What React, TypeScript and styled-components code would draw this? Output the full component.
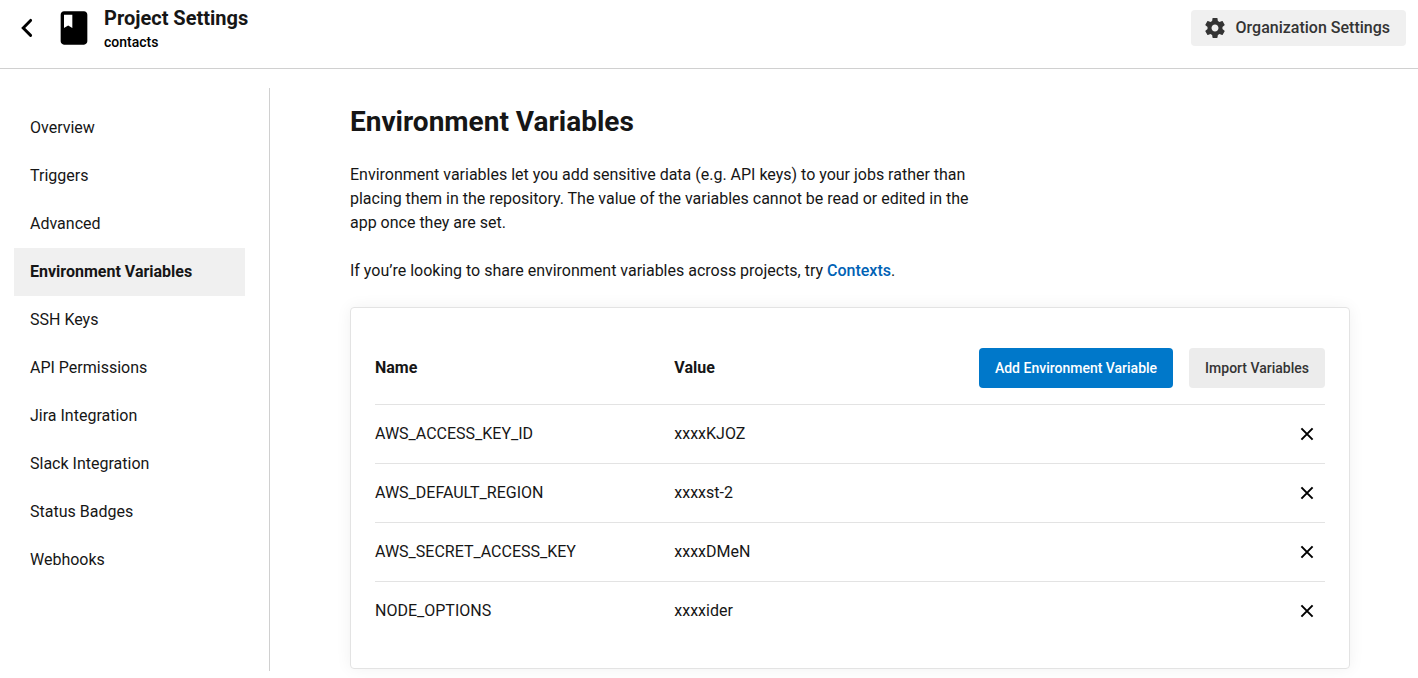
import React from "react";
import styled, { createGlobalStyle } from "styled-components";

const GlobalStyle = createGlobalStyle`
  *, *::before, *::after { box-sizing: border-box; }
  body {
    margin: 0;
    background: #fff;
    color: #161616;
    font-family: Roboto, "Liberation Sans", sans-serif;
    font-size: 16px;
    line-height: 24px;
  }
  h1, h2, p { margin: 0; }
  button { font-family: inherit; border: 0; cursor: pointer; }
`;

const Page = styled.div`
  height: 678px;
  overflow: hidden;
`;

const Header = styled.header`
  display: flex;
  align-items: flex-start;
  height: 69px;
  padding: 8px 12px 0 14px;
  border-bottom: 1px solid #d0d0d0;
`;

const BackButton = styled.button`
  display: flex;
  width: 26px;
  height: 40px;
  padding: 0;
  align-items: center;
  justify-content: center;
  background: none;
`;

const BookIcon = styled.svg`
  width: 40px;
  height: 40px;
  margin-left: 14px;
`;

const Titles = styled.div`
  flex: 1;
  margin-left: 10px;
`;

const Title = styled.h1`
  font-size: 20px;
  font-weight: 700;
  line-height: 20px;
`;

const Subtitle = styled.p`
  margin-top: 4px;
  font-size: 14px;
  font-weight: 500;
  line-height: 20px;
  color: #000;
`;

const OrgButton = styled.button`
  display: flex;
  align-items: center;
  width: 215px;
  height: 36px;
  margin-top: 2px;
  padding: 0 16px 0 12px;
  justify-content: space-between;
  border-radius: 4px;
  background: #f0f0f0;
  color: #343434;
  font-size: 16px;
  font-weight: 500;
  line-height: 20px;
`;

const Body = styled.div`
  display: flex;
  align-items: flex-start;
  padding-top: 19px;
`;

const Sidebar = styled.nav`
  width: 270px;
  height: 583px;
  padding: 16px 24px 0 14px;
  border-right: 1px solid #d0d0d0;
`;

const NavItem = styled.a<{ $active?: boolean }>`
  display: block;
  height: 48px;
  padding: 12px 16px;
  line-height: 24px;
  white-space: nowrap;
  font-weight: ${(p) => (p.$active ? 700 : 400)};
  background: ${(p) => (p.$active ? "#f0f0f0" : "transparent")};
`;

const Main = styled.main`
  width: 1000px;
  margin-left: 80px;
  padding-top: 17px;
`;

const Heading = styled.h2`
  font-size: 28px;
  font-weight: 700;
  line-height: 34px;
`;

const Paragraph = styled.p`
  width: 640px;
  margin-top: 24px;
  letter-spacing: -0.006px;
`;

const TextLink = styled.a`
  color: #0062b5;
  font-weight: 500;
`;

const Card = styled.section`
  height: 362px;
  margin-top: 24px;
  padding: 40px 24px 0;
  border: 1px solid #e3e3e3;
  border-radius: 4px;
  box-shadow: 0 0 16px rgba(0, 0, 0, 0.06);
`;

const Row = styled.div`
  display: grid;
  grid-template-columns: 299.3px 1fr auto;
  align-items: center;
  height: 59px;
  padding-right: 8px;
  padding-bottom: 1px;
  border-top: 1px solid #e3e3e3;
`;

const HeadRow = styled(Row)`
  height: 56px;
  padding-right: 0;
  padding-bottom: 16px;
  border-top: 0;
  font-weight: 700;
`;

const Actions = styled.div`
  display: flex;
  gap: 16px;
`;

const ActionButton = styled.button<{ $primary?: boolean }>`
  height: 40px;
  padding: 0 16px;
  border-radius: 4px;
  font-size: 14px;
  font-weight: 500;
  white-space: nowrap;
  color: ${(p) => (p.$primary ? "#fff" : "#343434")};
  background: ${(p) => (p.$primary ? "#0078ca" : "#ececec")};
`;

const RemoveButton = styled.button`
  display: flex;
  width: 20px;
  height: 20px;
  padding: 0;
  align-items: center;
  justify-content: center;
  background: none;
`;

const navItems = [
  "Overview",
  "Triggers",
  "Advanced",
  "Environment Variables",
  "SSH Keys",
  "API Permissions",
  "Jira Integration",
  "Slack Integration",
  "Status Badges",
  "Webhooks",
];

const variables = [
  { name: "AWS_ACCESS_KEY_ID", value: "xxxxKJOZ" },
  { name: "AWS_DEFAULT_REGION", value: "xxxxst-2" },
  { name: "AWS_SECRET_ACCESS_KEY", value: "xxxxDMeN" },
  { name: "NODE_OPTIONS", value: "xxxxider" },
];

export default function App() {
  return (
    <Page>
      <GlobalStyle />
      <Header>
        <BackButton aria-label="Back">
          <svg width="26" height="40" viewBox="0 0 26 40" fill="none" stroke="#000" strokeWidth="2.9" strokeLinecap="round" strokeLinejoin="miter">
            <path d="M16.6 12.4 9.2 20l7.4 7.4" />
          </svg>
        </BackButton>
        <BookIcon viewBox="0 0 24 24">
          <path d="M18 2H6c-1.1 0-2 .9-2 2v16c0 1.1.9 2 2 2h12c1.1 0 2-.9 2-2V4c0-1.1-.9-2-2-2zM6 4h5v8l-2.5-1.5L6 12V4z" />
        </BookIcon>
        <Titles>
          <Title>Project Settings</Title>
          <Subtitle>contacts</Subtitle>
        </Titles>
        <OrgButton>
          <svg width="24" height="24" viewBox="0 0 24 24" fill="#343434">
            <path d="M19.43 12.98c.04-.32.07-.64.07-.98s-.03-.66-.07-.98l2.11-1.65c.19-.15.24-.42.12-.64l-2-3.46c-.12-.22-.39-.3-.61-.22l-2.49 1c-.52-.4-1.08-.73-1.69-.98l-.38-2.65C14.46 2.18 14.25 2 14 2h-4c-.25 0-.46.18-.49.42l-.38 2.65c-.61.25-1.17.59-1.69.98l-2.49-1c-.23-.09-.49 0-.61.22l-2 3.46c-.13.22-.07.49.12.64l2.11 1.65c-.04.32-.07.65-.07.98s.03.66.07.98l-2.11 1.65c-.19.15-.24.42-.12.64l2 3.46c.12.22.39.3.61.22l2.49-1c.52.4 1.08.73 1.69.98l.38 2.65c.03.24.24.42.49.42h4c.25 0 .46-.18.49-.42l.38-2.65c.61-.25 1.17-.59 1.69-.98l2.49 1c.23.09.49 0 .61-.22l2-3.46c.12-.22.07-.49-.12-.64l-2.11-1.65zM12 15.5c-1.93 0-3.5-1.57-3.5-3.5s1.57-3.5 3.5-3.5 3.5 1.57 3.5 3.5-1.57 3.5-3.5 3.5z" />
          </svg>
          <span>Organization Settings</span>
        </OrgButton>
      </Header>
      <Body>
        <Sidebar>
          {navItems.map((item) => (
            <NavItem key={item} $active={item === "Environment Variables"}>
              {item}
            </NavItem>
          ))}
        </Sidebar>
        <Main>
          <Heading>Environment Variables</Heading>
          <Paragraph>
            Environment variables let you add sensitive data (e.g. API keys) to your jobs rather than placing them in
            the repository. The value of the variables cannot be read or edited in the app once they are set.
          </Paragraph>
          <Paragraph>
            If you’re looking to share environment variables across projects, try <TextLink>Contexts</TextLink>.
          </Paragraph>
          <Card>
            <HeadRow>
              <span>Name</span>
              <span>Value</span>
              <Actions>
                <ActionButton $primary>Add Environment Variable</ActionButton>
                <ActionButton>Import Variables</ActionButton>
              </Actions>
            </HeadRow>
            {variables.map((v) => (
              <Row key={v.name}>
                <span>{v.name}</span>
                <span>{v.value}</span>
                <RemoveButton aria-label={`Remove ${v.name}`}>
                  <svg width="20" height="20" viewBox="0 0 20 20" fill="none" stroke="#000" strokeWidth="2">
                    <path d="M4.4 4.4 15.6 15.6M15.6 4.4 4.4 15.6" />
                  </svg>
                </RemoveButton>
              </Row>
            ))}
          </Card>
        </Main>
      </Body>
    </Page>
  );
}
